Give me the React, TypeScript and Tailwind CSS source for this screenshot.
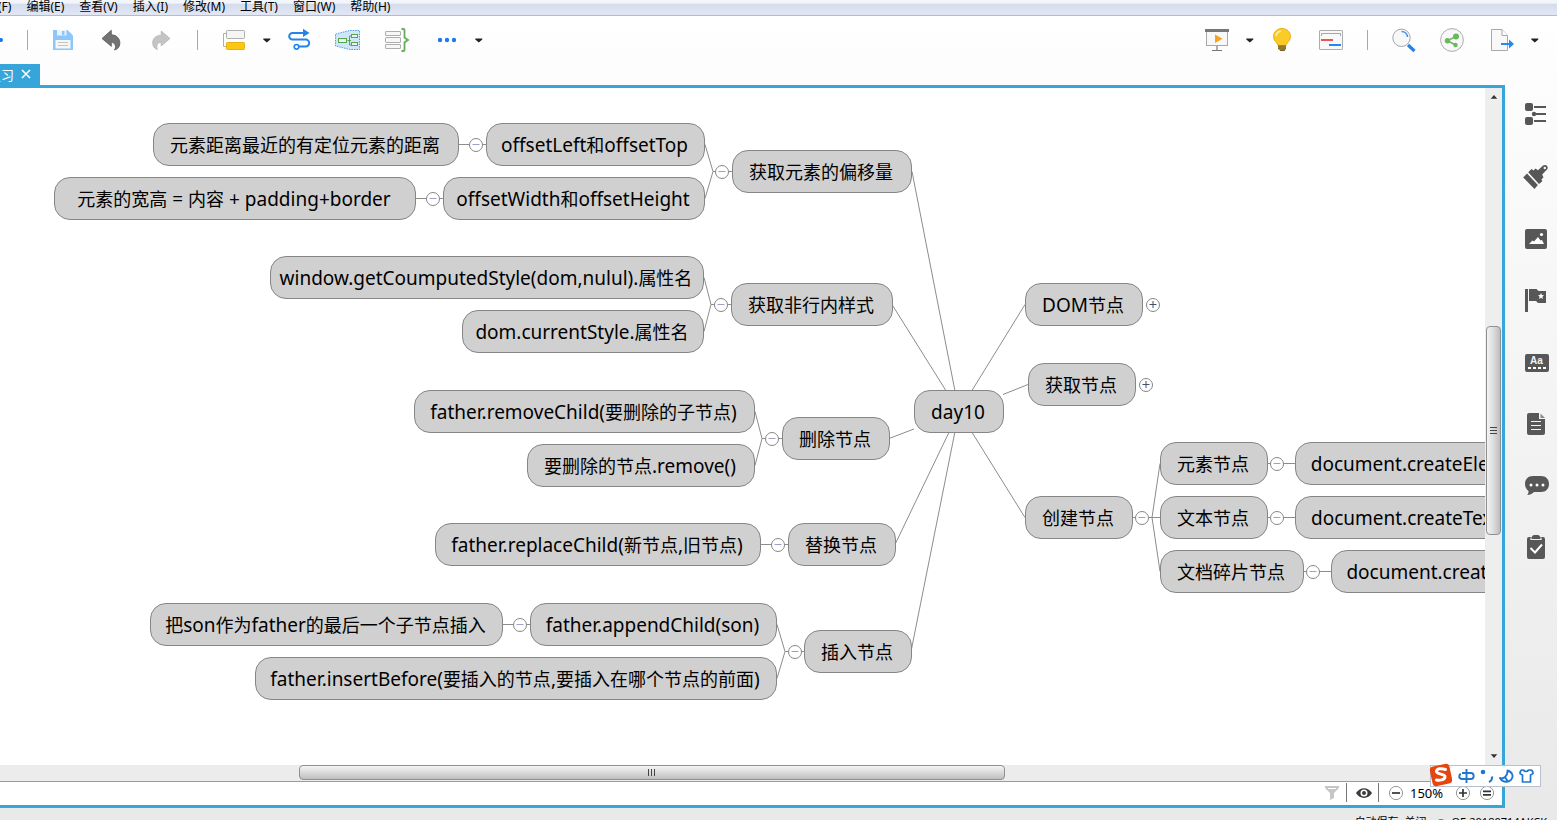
import React from "react";

type MapNode = { label: string; x: number; y: number; w: number };
type Toggle = { x: number; y: number; open: boolean; name: string };

const NODE_HEIGHT = 43;

const nodes: MapNode[] = [
  { label: "day10", x: 914, y: 302, w: 90 },
  { label: "获取元素的偏移量", x: 732, y: 62, w: 180 },
  { label: "offsetLeft和offsetTop", x: 486, y: 35, w: 219 },
  { label: "元素距离最近的有定位元素的距离", x: 153, y: 35, w: 306 },
  { label: "offsetWidth和offsetHeight", x: 443, y: 89, w: 262 },
  { label: "元素的宽高 = 内容 + padding+border", x: 54, y: 89, w: 362 },
  { label: "获取非行内样式", x: 731, y: 195, w: 162 },
  { label: "window.getCoumputedStyle(dom,nulul).属性名", x: 270, y: 168, w: 434 },
  { label: "dom.currentStyle.属性名", x: 462, y: 222, w: 242 },
  { label: "删除节点", x: 782, y: 329, w: 108 },
  { label: "father.removeChild(要删除的子节点)", x: 414, y: 302, w: 341 },
  { label: "要删除的节点.remove()", x: 527, y: 356, w: 228 },
  { label: "替换节点", x: 788, y: 435, w: 108 },
  { label: "father.replaceChild(新节点,旧节点)", x: 435, y: 435, w: 326 },
  { label: "插入节点", x: 804, y: 542, w: 108 },
  { label: "father.appendChild(son)", x: 530, y: 515, w: 247 },
  { label: "把son作为father的最后一个子节点插入", x: 150, y: 515, w: 353 },
  { label: "father.insertBefore(要插入的节点,要插入在哪个节点的前面)", x: 255, y: 569, w: 522 },
  { label: "DOM节点", x: 1025, y: 195, w: 118 },
  { label: "获取节点", x: 1028, y: 275, w: 108 },
  { label: "创建节点", x: 1025, y: 408, w: 108 },
  { label: "元素节点", x: 1160, y: 354, w: 108 },
  { label: "文本节点", x: 1160, y: 408, w: 108 },
  { label: "文档碎片节点", x: 1160, y: 462, w: 144 },
  { label: "document.createElement()", x: 1295, y: 354, w: 270 },
  { label: "document.createTextNode()", x: 1295, y: 408, w: 282 },
  { label: "document.createDocumentFragment()", x: 1331, y: 462, w: 376 },
];

const toggles: Toggle[] = [
  { x: 722, y: 84, open: true, name: "获取元素的偏移量" },
  { x: 476, y: 57, open: true, name: "offsetLeft和offsetTop" },
  { x: 433, y: 111, open: true, name: "offsetWidth和offsetHeight" },
  { x: 721, y: 217, open: true, name: "获取非行内样式" },
  { x: 772, y: 351, open: true, name: "删除节点" },
  { x: 778, y: 457, open: true, name: "替换节点" },
  { x: 795, y: 564, open: true, name: "插入节点" },
  { x: 520, y: 537, open: true, name: "father.appendChild(son)" },
  { x: 1153, y: 217, open: false, name: "DOM节点" },
  { x: 1146, y: 297, open: false, name: "获取节点" },
  { x: 1142, y: 430, open: true, name: "创建节点" },
  { x: 1277, y: 376, open: true, name: "元素节点" },
  { x: 1277, y: 430, open: true, name: "文本节点" },
  { x: 1313, y: 484, open: true, name: "文档碎片节点" },
];

const links: string[] = [
  "M959 324L912 84",
  "M959 324L892 217",
  "M914 341.500L889 351",
  "M959 324L895 457",
  "M959 324L911 564",
  "M959 324L1025 217",
  "M1003 307L1028 297",
  "M959 324L1025 430",
  "M732 84H713L705 57M713 84L705 111",
  "M486 57H459",
  "M443 111H416",
  "M731 217H711L704 190M711 217L704 244",
  "M782 351H762L755 324M762 351L755 378",
  "M788 457H761",
  "M804 564H785L777 537M785 564L777 591",
  "M530 537H503",
  "M1133 430H1160M1152 430L1160 376M1152 430L1160 484",
  "M1268 376H1295",
  "M1268 430H1295",
  "M1304 484H1331",
];

/* Latin runs are set one pixel larger than the Chinese ones so that both look the same size. */
function Label({ text }: { text: string }) {
  const runs = text.split(/([\x20-\x7e]+)/).filter(Boolean);
  return (
    <>
      {runs.map((run, i) => (
        <span key={i} className={/^[\x20-\x7e]/.test(run) ? "text-[19px]" : "text-[18px]"}>
          {run}
        </span>
      ))}
    </>
  );
}

function MindMap() {
  return (
    <main className="relative min-w-0 flex-1 overflow-hidden bg-white">
      <svg className="absolute top-0 left-0 h-full w-full" fill="none" stroke="#8c8c8c" aria-hidden="true">
        <g transform="translate(0 -.5)">
          {links.map((d) => (
            <path key={d} d={d} />
          ))}
        </g>
      </svg>
      {nodes.map((n) => (
        <div
          key={n.label}
          className="absolute flex items-center justify-center rounded-2xl border border-[#868686] bg-[#d0d0d0] pt-[2px] pr-[2px] leading-6 whitespace-pre text-black"
          style={{ left: n.x, top: n.y, width: n.w, height: NODE_HEIGHT }}
        >
          <div>
            <Label text={n.label} />
          </div>
        </div>
      ))}
      {toggles.map((t) => (
        <button
          key={t.name}
          type="button"
          aria-label={t.name}
          aria-expanded={t.open}
          className="absolute h-[14px] w-[14px] -translate-x-1/2 -translate-y-1/2"
          style={{ left: t.x, top: t.y }}
        >
          <svg viewBox="0 0 14 14" fill="none" className="block">
            <circle cx="7" cy="7" r="6.500" fill="#fff" stroke="#868686" />
            <path d="M3.500 6.500h7" stroke={t.open ? "#9aa2cc" : "#43506e"} />
            {!t.open && <path d="M7 3v7" stroke="#43506e" />}
          </svg>
        </button>
      ))}
    </main>
  );
}

function Tool({ label, children }: { label: string; children: React.ReactNode }) {
  return (
    <button type="button" aria-label={label} className="h-[26px] w-[26px] shrink-0">
      <svg viewBox="0 0 26 26" fill="none" className="block h-[26px] w-[26px]">
        {children}
      </svg>
    </button>
  );
}

function Caret({ label }: { label: string }) {
  return (
    <button type="button" aria-label={label} className="flex h-[26px] w-4 shrink-0 items-center justify-center">
      <svg viewBox="0 0 8 5" className="h-[5px] w-2">
        <path d="M.3.500h7v1L3.800 4.600.3 1.500z" fill="#222" />
      </svg>
    </button>
  );
}

function Divider() {
  return <span className="h-5 w-px shrink-0 bg-[#a8a8a8]" />;
}

function Toolbar() {
  return (
    <div className="flex h-12 shrink-0 items-center justify-between overflow-hidden bg-gradient-to-b from-white to-[#fdfdfd] pr-[14px]">
      <div className="flex items-center">
        <span className="h-1 w-[3px] rounded-r-full bg-[#1878e8]" />
        <span className="w-6" />
        <div className="flex items-center gap-[22px]">
          <Divider />
          <div className="flex items-center gap-[23px]">
            <Tool label="保存">
              <path d="M3 3h14.500l5.500 5.500V23H3z" fill="#8cc6fb" />
              <path d="M7 3h9.500v5.500H7z" fill="#e9f3fc" />
              <path d="M12 4h2.500v4H12z" fill="#8cc6fb" />
              <path d="M5.500 13h15v8.500h-15z" fill="#f6f6f6" />
              <path d="M8 15.500h10M8 18.500h10" stroke="#c4c4c4" />
            </Tool>
            <Tool label="撤销">
              <path d="M3 11.500 12.300 3.300v4.500c5.500.2 9 4 8.500 9-.3 3.300-2 5.400-5.300 6.200 2-3.300 1-7.500-3.200-7.700v4z" fill="#737373" stroke="#555" strokeWidth=".8" />
            </Tool>
            <Tool label="重做">
              <path d="M22 11.500 13.200 4v4.200c-5.500.2-8.800 3.500-8.500 8.200.3 3.200 1.800 5.200 4.800 6.100-1.600-3.100-.6-7 3.700-7.200V19z" fill="#c4c4c4" stroke="#b5b5b5" strokeWidth=".8" />
            </Tool>
          </div>
        </div>
        <div className="flex items-center gap-[23px] pl-[23px]">
          <Divider />
          <div className="flex items-center gap-3">
            <Tool label="主题">
              <path d="M5 6.500H2.500v13H5" stroke="#b0b0b0" />
              <rect x="5.500" y="3.500" width="18" height="8" rx=".8" fill="#f5f5f5" stroke="#b0b0b0" />
              <rect x="5.500" y="15.500" width="18" height="7" rx=".8" fill="#fdc514" stroke="#eab010" />
            </Tool>
            <Caret label="主题选项" />
          </div>
        </div>
        <div className="flex items-center gap-[23px] pl-[11px]">
          <Tool label="联系">
            <path d="M19 6H6.500a3.300 3.300 0 0 0 0 6.600h13.200a3.500 3.500 0 0 1 0 7H13" stroke="#2383ea" strokeWidth="2" />
            <path d="M17 1.800 23.500 6 17 10z" fill="#2383ea" />
            <circle cx="10.500" cy="19.800" r="2.300" stroke="#2383ea" strokeWidth="1.600" />
          </Tool>
          <Tool label="外框">
            <path d="M.5 7 15 3.500h9.500v19H15L.5 19z" fill="#cfe5fa" stroke="#4a9cf0" strokeDasharray="1.500 1" />
            <path d="M12.500 13.500h3.500M16.500 9h-2v9h2" stroke="#57a64f" />
            <rect x="3.500" y="11.500" width="8" height="4" fill="#eaf5f2" stroke="#57a64f" />
            <rect x="16.500" y="7.500" width="6" height="3" fill="#eaf5f2" stroke="#57a64f" />
            <rect x="16.500" y="15.500" width="6" height="3" fill="#eaf5f2" stroke="#57a64f" />
          </Tool>
          <Tool label="概要">
            <g fill="#f7f7f7" stroke="#adadad">
              <rect x="1.500" y="4.500" width="15" height="4" rx=".5" />
              <rect x="1.500" y="10.500" width="15" height="5" rx=".5" />
              <rect x="1.500" y="17.500" width="15" height="4" rx=".5" />
            </g>
            <path d="M17.500 2h2q1 0 1 1v7.500l3.500 2.500-3.500 2.500V23q0 1-1 1h-2" stroke="#67ad5b" strokeWidth="1.800" />
          </Tool>
          <div className="flex items-center gap-3">
            <Tool label="更多">
              <g fill="#1f7bea">
                <circle cx="7" cy="13" r="2.200" />
                <circle cx="14" cy="13" r="2.200" />
                <circle cx="21" cy="13" r="2.200" />
              </g>
            </Tool>
            <Caret label="更多选项" />
          </div>
        </div>
      </div>

      <div className="flex items-center">
        <div className="flex items-center gap-3">
          <Tool label="演示">
            <rect x="2.500" y="4.500" width="21" height="14" fill="#f8f8f8" stroke="#a8a8a8" />
            <path d="M1 2h24v3H1z" fill="#777" />
            <path d="m11 7.500 7.500 4.200L11 16z" fill="#f9a11b" />
            <path d="M13 19v4M8 23.500h10" stroke="#777" strokeWidth="1.200" />
          </Tool>
          <Caret label="演示选项" />
        </div>
        <div className="flex items-center gap-[23px] pl-[11px]">
          <Tool label="头脑风暴">
            <path d="M13 1.500c-5 0-8.500 3.700-8.500 8 0 4.200 3.500 5.500 4.500 9h8c1-3.500 4.500-4.800 4.500-9 0-4.300-3.500-8-8.500-8z" fill="#fdcb28" stroke="#e9ae12" />
            <path d="M7 9c.3-2.800 2-4.500 5-5" stroke="#fff2b5" strokeWidth="1.500" />
            <path d="M9 18.500h8v3L15.500 24h-4L9 21.500z" fill="#6b5a2c" />
            <path d="M9 20h8M9.500 22h7" stroke="#d9a528" strokeWidth=".8" />
          </Tool>
          <Tool label="甘特图">
            <rect x="1.500" y="3.500" width="23" height="19" rx=".5" fill="#f8f8f8" stroke="#adadad" />
            <path d="M3.500 9V6.500h19V9" stroke="#a5a5a5" />
            <path d="M3 13h12" stroke="#ef5350" strokeWidth="2" />
            <path d="M11 18h12" stroke="#2388ef" strokeWidth="2" />
          </Tool>
          <Divider />
          <Tool label="搜索">
            <path d="m17 18 6.500 6" stroke="#2383ea" strokeWidth="3.200" />
            <circle cx="10.500" cy="10.800" r="8.700" fill="#f6f8fa" stroke="#a5a5a5" />
            <path d="M10.500 4.500c3.200 0 5.800 2.300 6 5.500" stroke="#3b95ee" strokeWidth="1.500" />
          </Tool>
          <Tool label="分享">
            <circle cx="12" cy="13" r="11.400" fill="#f8f8f8" stroke="#adadad" />
            <path d="M15.500 18 7.500 13.700 16 9.500" stroke="#68b95b" strokeWidth="1.500" />
            <g fill="#68b95b">
              <circle cx="7.500" cy="13.700" r="2.700" />
              <circle cx="16" cy="9.500" r="3" />
              <circle cx="15.500" cy="18" r="2.200" />
            </g>
          </Tool>
          <div className="flex items-center gap-3">
            <Tool label="导出">
              <path d="M2.500 2.500h10.500l5.500 6v15h-16z" fill="#f8f8f8" stroke="#a8a8a8" />
              <path d="M13 2.500v6h5.500" fill="#fff" stroke="#a8a8a8" />
              <path d="M12 17h9" stroke="#2388ef" strokeWidth="2" />
              <path d="m20 12.500 5 4.500-5 4.500z" fill="#2388ef" />
            </Tool>
            <Caret label="导出选项" />
          </div>
        </div>
      </div>
    </div>
  );
}

function SidePanel() {
  return (
    <aside className="flex w-[52px] shrink-0 flex-col gap-9 bg-gradient-to-b from-[#fdfdfd] to-[#e9e9e9] pt-[37px] pl-[18px]">
      <Tool label="大纲">
        <g fill="#575757">
          <rect x="2" y="2" width="8" height="8" rx="2" />
          <rect x="2" y="16" width="8" height="8" rx="2" />
          <circle cx="11" cy="13" r="2.200" />
        </g>
        <path d="M11 6h12M13 13h10M11 20h12" stroke="#575757" strokeWidth="1.800" />
      </Tool>
      <Tool label="格式">
        <path d="M4 10.500 14.800 22l-3.300 4L.200 14.500z" fill="#575757" />
        <path d="M5.200 9.200 8.500 6l2 1.500L12.500 5.500l2.500 1.700L20 2.600c3-2.200 6.200 1.300 4 4l-4.800 4.900 1.300 3-2 1.800.8 2L16 21z" fill="#575757" />
        <circle cx="21.800" cy="5" r="1.200" fill="#f8f8f8" />
      </Tool>
      <Tool label="图片">
        <rect x="2" y="4" width="22" height="20" rx="2" fill="#575757" />
        <path d="m6 19 3.500-3.500 1.500 1 4-4.500 2.500 3.500 1.500-.5 2 4z" fill="#fff" />
        <circle cx="18.500" cy="9.500" r="1.600" fill="#fff" />
      </Tool>
      <Tool label="图标">
        <path d="M2 2h3v23H2zM6 2h7.500l2 2H23v12h-8l-2-2H6z" fill="#575757" />
        <path d="m18 6 .9 2 2.100.2-1.600 1.500.5 2.200-1.900-1.200-1.900 1.200.5-2.200L15 8.200l2.100-.2z" fill="#fff" />
      </Tool>
      <Tool label="风格">
        <rect x="2" y="5" width="24" height="18" rx="2" fill="#575757" />
        <text x="13.500" y="14.500" textAnchor="middle" fill="#f4f4f4" fontFamily="Liberation Sans" fontSize="10" fontWeight="bold">
          Aa
        </text>
        <path d="M5 19h18" stroke="#fff" strokeWidth="2" strokeDasharray="3 2" />
      </Tool>
      <Tool label="备注">
        <path d="M6 2h10v6h6v14a2 2 0 0 1-2 2H6a2 2 0 0 1-2-2V4a2 2 0 0 1 2-2z" fill="#575757" />
        <path d="m17.500 2.500 4.500 4.500h-4.500z" fill="#8a8a8a" />
        <path d="M8 10.500h10M8 14.500h10M8 18.500h10" stroke="#f4f4f4" strokeWidth="1.200" />
      </Tool>
      <Tool label="批注">
        <path d="M10 3h8c5 0 8 3.500 8 8s-3 8-8 8h-7c-2 2-4 3-7 3 1.200-1 1.700-2.300 1.500-4C3.500 16.500 2 14 2 11c0-4.500 3-8 8-8z" fill="#575757" />
        <g fill="#fff">
          <circle cx="8" cy="12" r="1.500" />
          <circle cx="14" cy="12" r="1.500" />
          <circle cx="20" cy="12" r="1.500" />
        </g>
      </Tool>
      <Tool label="任务信息">
        <path d="M6 2h3c0-3 8-3 8 0h3a2 2 0 0 1 2 2v18a2 2 0 0 1-2 2H6a2 2 0 0 1-2-2V4a2 2 0 0 1 2-2z" fill="#575757" />
        <path d="M8 2.500v2h10v-2" stroke="#ededed" strokeWidth="1.200" />
        <path d="m7.500 13 4.500 4.500 7-8" stroke="#fff" strokeWidth="2" />
      </Tool>
    </aside>
  );
}

function VerticalScroll() {
  return (
    <div className="flex w-[17px] shrink-0 flex-col items-start bg-[#eeeeee] pl-px">
      <svg viewBox="0 0 17 17" className="h-[17px] w-4 shrink-0">
        <path d="M8.500 7 12 11H5z" fill="#333" />
      </svg>
      <span className="grow-[222] basis-0" />
      <div className="flex w-[15px] grow-[207] basis-0 flex-col items-center justify-center gap-[2px] rounded-sm border border-[#8f8f8f] bg-gradient-to-r from-[#f3f3f3] via-[#dcdcde] to-[#bdbdc0]">
        <span className="h-px w-[7px] bg-[#444]" />
        <span className="h-px w-[7px] bg-[#444]" />
        <span className="h-px w-[7px] bg-[#444]" />
      </div>
      <span className="grow-[214] basis-0" />
      <svg viewBox="0 0 17 17" className="h-[17px] w-4 shrink-0">
        <path d="M5 6h7l-3.500 4z" fill="#333" />
      </svg>
    </div>
  );
}

function HorizontalScroll() {
  return (
    <div className="flex h-[17px] shrink-0 border-b border-[#9b9b9b] bg-[#ececec] pb-px">
      <span className="grow-[299] basis-0" />
      <div className="flex grow-[705] basis-0 items-center justify-center gap-[2px] rounded-sm border border-[#8f8f8f] bg-gradient-to-b from-[#f5f5f5] via-[#dadadb] to-[#bebec1]">
        <span className="h-[7px] w-px bg-[#444]" />
        <span className="h-[7px] w-px bg-[#444]" />
        <span className="h-[7px] w-px bg-[#444]" />
      </div>
      <span className="grow-[498] basis-0" />
    </div>
  );
}

function RoundButton({ label, d }: { label: string; d: string }) {
  return (
    <button type="button" aria-label={label} className="h-4 w-4 shrink-0">
      <svg viewBox="0 0 16 16" fill="none" className="block h-4 w-4">
        <circle cx="8" cy="8" r="6.600" stroke="#999" />
        <path d={d} stroke="#333" strokeWidth="1.700" />
      </svg>
    </button>
  );
}

function StatusRow() {
  return (
    <div className="flex h-[23px] shrink-0 items-center justify-end bg-white pr-[7px] pb-[2px]">
      <button type="button" aria-label="筛选" className="mr-[6px] h-4 w-4">
        <svg viewBox="0 0 16 16" className="block">
          <path d="M1 1h14v2l-5 5v5l-4 2V8L1 3z" fill="#c6c6c6" />
          <path d="M4 3.500h8" stroke="#fff" />
        </svg>
      </button>
      <span className="h-[19px] w-px bg-[#777]" />
      <button type="button" aria-label="显示" className="mr-[6px] ml-[9px] h-4 w-4">
        <svg viewBox="0 0 16 16" fill="none" className="block">
          <path d="M0 8c4-6.500 12-6.500 16 0-4 6.500-12 6.500-16 0z" fill="#3c3c3c" />
          <circle cx="8" cy="8" r="3.500" fill="#fff" />
          <circle cx="8" cy="8" r="2" fill="#3c3c3c" />
        </svg>
      </button>
      <span className="h-[19px] w-px bg-[#777]" />
      <div className="flex items-center pl-[9px]">
        <RoundButton label="缩小" d="M4 8h8" />
        <span className="w-[51px] pl-[6px] text-[13px] leading-4 text-black">150%</span>
        <div className="flex gap-2">
          <RoundButton label="放大" d="M4 8h8M8 4v8" />
          <RoundButton label="适应大小" d="M4 6.300h8M4 9.800h8" />
        </div>
      </div>
    </div>
  );
}

function InputMethodBar() {
  return (
    <div className="absolute right-4 bottom-[33px] flex h-[22px] w-[111px] items-center border border-[#b9c0d0] bg-white pl-[27px]">
      <svg viewBox="0 0 24 24" className="absolute -top-[3px] -left-[2px] h-6 w-6">
        <rect x="2" y="2" width="20" height="20" rx="4" fill="#e5450f" transform="rotate(-12 12 12)" />
        <path d="M16.500 6.500c-4-1.500-9-1-9 2 0 3.200 9 2 8.500 5.500-.5 3-5.500 3.800-8.500 3" fill="none" stroke="#fff" strokeWidth="3" strokeLinecap="round" />
      </svg>
      <div className="flex gap-1">
        <svg viewBox="0 0 17 16" fill="none" stroke="#2277cc" strokeWidth="1.900" className="h-4 w-[17px]">
          <path d="M8.500 1v14M4 5h9c3.500 0 3.500 6 0 6H4C.5 11 .5 6.500 3 6" />
        </svg>
        <svg viewBox="0 0 15 16" fill="none" className="h-4 w-[15px]">
          <circle cx="4" cy="4" r="2.300" fill="#2277cc" />
          <path d="M13 8.500c.3 2.500-.7 4.500-3 5.500" stroke="#2277cc" strokeWidth="2.200" />
        </svg>
        <svg viewBox="0 0 16 16" fill="none" className="h-4 w-4">
          <path d="M9.500 2.500c5 1.500 6.500 6 3.500 9.300-3 3-8.500 2.700-11-1.800 2 .8 3.500.5 5-1 2-1.700 2.700-3.700 2.500-6.500zM7 9l2.500 4" stroke="#2277cc" strokeWidth="1.900" strokeLinejoin="round" />
        </svg>
        <svg viewBox="0 0 16 16" fill="none" className="h-4 w-4">
          <path d="M5.500 2c1 2 4 2 5 0h2.500c1.500.5 2 1.500 2 3.500L12.500 7v7h-8V7L2 5.500C2 3.500 2.500 2.500 4 2z" stroke="#2277cc" strokeWidth="1.700" strokeLinejoin="round" />
        </svg>
      </div>
    </div>
  );
}

const menus = ["文件(F)", "编辑(E)", "查看(V)", "插入(I)", "修改(M)", "工具(T)", "窗口(W)", "帮助(H)"];

export default function App() {
  return (
    <div className="relative flex h-screen flex-col overflow-hidden bg-[#e9e9e9] font-['Noto_Sans','Noto_Sans_CJK_SC',sans-serif]">
      <nav className="flex h-4 shrink-0 items-start gap-[15px] border-b border-[#b5bbcb] bg-gradient-to-b from-[#f2f5fa] from-20% via-[#d5dcec] via-30% to-[#e2e7f5]">
        {menus.map((m) => (
          <button
            key={m}
            type="button"
            className="shrink-0 text-[12px] leading-[14px] whitespace-nowrap text-black first:-ml-[26px]"
          >
            {m}
          </button>
        ))}
      </nav>
      <Toolbar />
      <div className="flex min-h-0 flex-1">
        <div className="flex min-w-0 flex-1 flex-col">
          <div className="flex h-[21px] shrink-0 bg-[#fdfdfd]">
            <div className="flex w-10 items-center justify-end gap-[7px] overflow-hidden bg-[#35a5da] pr-[9px] text-white">
              <span className="shrink-0 text-[13px] leading-5">复习</span>
              <button type="button" aria-label="关闭标签页" className="mb-[2px] h-[10px] w-[10px] shrink-0">
                <svg viewBox="0 0 10 10" className="block">
                  <path d="m1 1 8 8M9 1 1 9" stroke="#fff" strokeWidth="1.600" />
                </svg>
              </button>
            </div>
          </div>
          <div className="flex min-h-0 flex-1 flex-col border-t-[3px] border-r-[3px] border-b-[3px] border-[#35a5da]">
            <div className="flex min-h-0 flex-1">
              <MindMap />
              <VerticalScroll />
            </div>
            <HorizontalScroll />
            <StatusRow />
          </div>
        </div>
        <SidePanel />
      </div>
      <footer className="flex h-3 shrink-0 items-start justify-end overflow-hidden bg-[#e9e9e9] pt-[6px] pr-[10px] text-[11px] leading-4 text-black">
        <span>自动保存: 关闭</span>
        <span className="mt-[5px] mr-[6px] ml-[11px] h-2 w-2 shrink-0 rounded-full bg-[#777]" />
        <span>QF-20180714AKCK</span>
      </footer>
      <InputMethodBar />
    </div>
  );
}
